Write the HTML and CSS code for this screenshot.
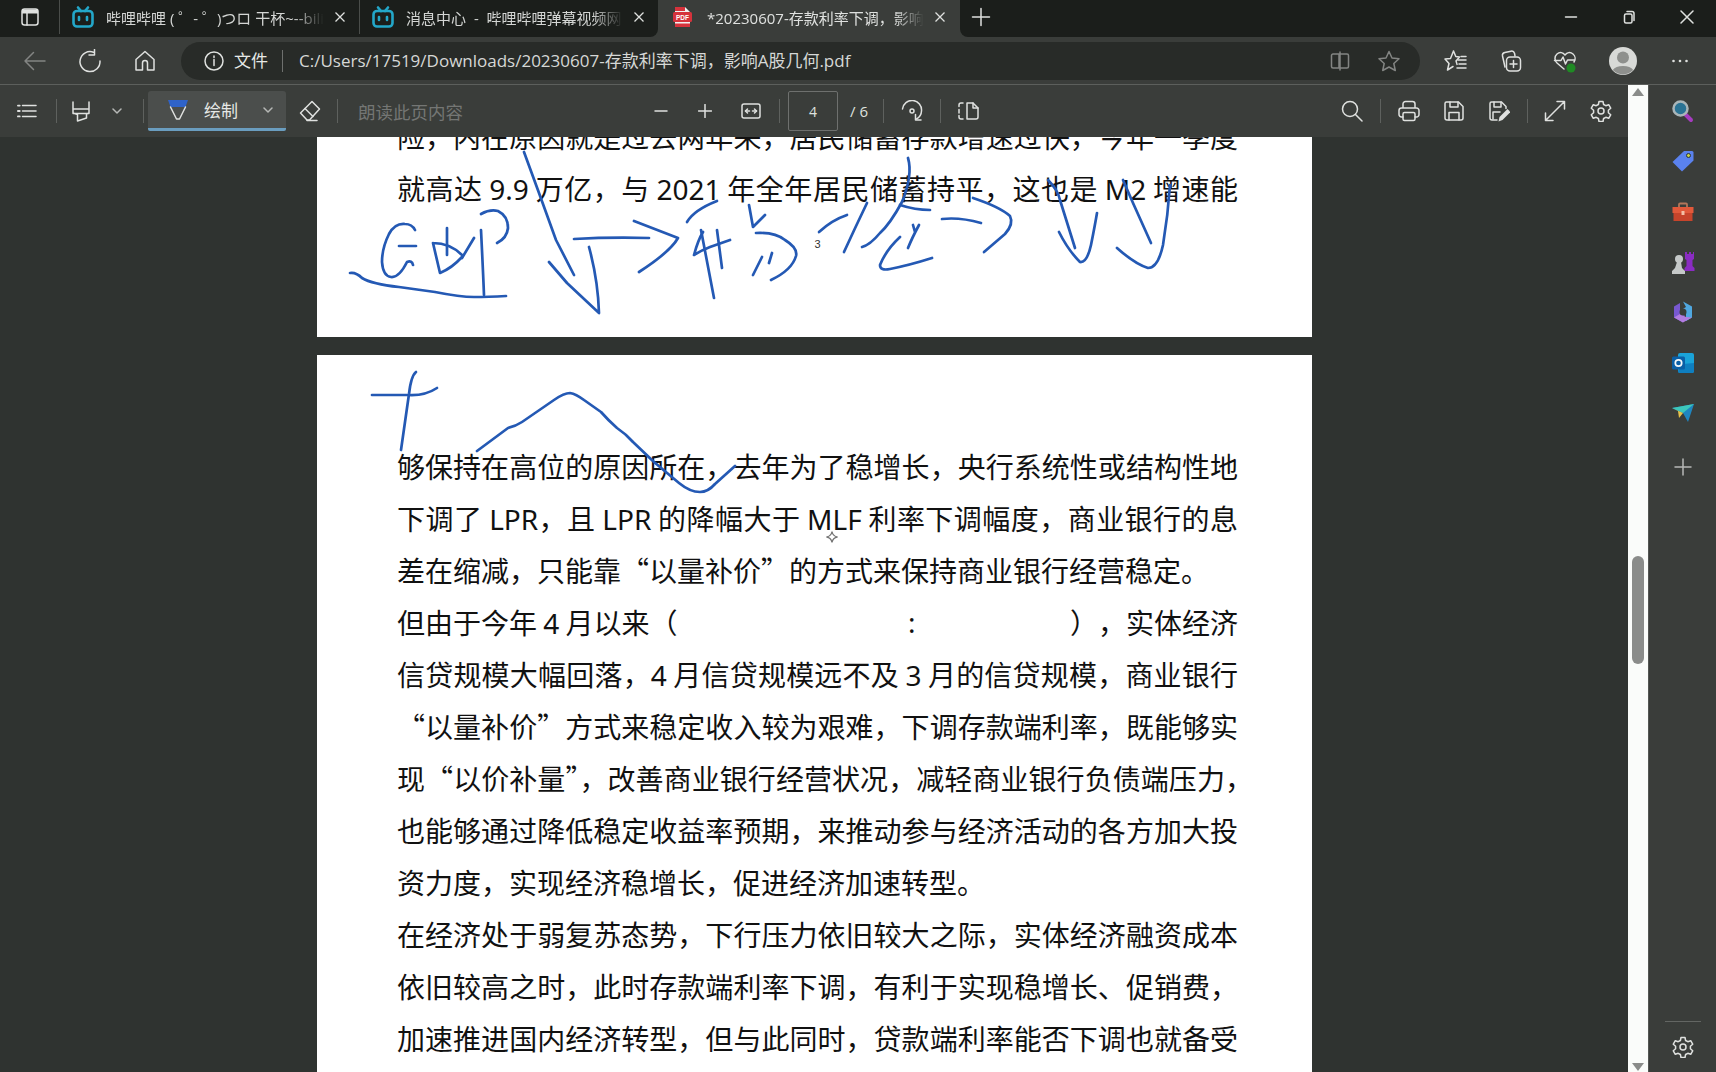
FILE: index.html
```html
<!DOCTYPE html>
<html lang="zh-CN">
<head>
<meta charset="utf-8">
<title>PDF</title>
<link rel="stylesheet" href="styles.css">
</head>
<body>
<div class="app">
  <header class="strip">
    <div class="strip-left">
      <div class="win-btn">
        <svg class="ic20" viewBox="0 0 20 20"><rect x="2" y="2" width="16" height="16" rx="2.5" class="s-white"/><path d="M2 6.5a4 4 0 0 1 1-4h14a4 4 0 0 1 1 4z" class="f-white"/><path d="M7 6v12" class="s-white"/></svg>
      </div>
      <div class="tab tab-a">
        <svg class="tab-ic" viewBox="0 0 24 24"><path d="M7 2.500 10 6M17 2.500 14 6" class="s-bili"/><rect x="2.500" y="6" width="19" height="15.500" rx="3.500" class="s-bili"/><path d="M8 12v3M16 12v3" class="s-bili"/></svg>
        <span class="tab-title">哔哩哔哩 ( ゜- ゜)つロ 干杯~--bilibili</span>
        <svg class="tab-x" viewBox="0 0 12 12"><path d="M1.500 1.500l9 9M10.500 1.500l-9 9"/></svg>
      </div>
      <div class="tab tab-b">
        <svg class="tab-ic" viewBox="0 0 24 24"><path d="M7 2.500 10 6M17 2.500 14 6" class="s-bili"/><rect x="2.500" y="6" width="19" height="15.500" rx="3.500" class="s-bili"/><path d="M8 12v3M16 12v3" class="s-bili"/></svg>
        <span class="tab-title tab-title-wide">消息中心 - 哔哩哔哩弹幕视频网 - (゜-゜)つロ 干杯~</span>
        <svg class="tab-x" viewBox="0 0 12 12"><path d="M1.500 1.500l9 9M10.500 1.500l-9 9"/></svg>
      </div>
    </div>
    <div class="tab tab-active">
      <svg class="tab-ic" viewBox="0 0 24 24"><path d="M5 2h10l5 5v15H5z" fill="#f2f2f2"/><rect x="3" y="7" width="19" height="10" rx="1.500" fill="#d5333c"/><path d="M5 18.500h15v3.500H5zM5 2h10v4H5z" fill="#d5333c"/><text x="12.500" y="14.800" class="pdf-mark">PDF</text></svg>
      <span class="tab-title">*20230607-存款利率下调，影响A股几何.pdf</span>
      <svg class="tab-x" viewBox="0 0 12 12"><path d="M1.500 1.500l9 9M10.500 1.500l-9 9"/></svg>
    </div>
    <div class="strip-right">
      <div class="new-tab"><svg class="ic20" viewBox="0 0 20 20"><path d="M10 1.500v17M1.500 10h17" class="s-white"/></svg></div>
      <div class="win-ctrls">
        <div class="ctrl"><svg class="ic14" viewBox="0 0 14 14"><path d="M1.500 7h11" class="s-white"/></svg></div>
        <div class="ctrl"><svg class="ic14" viewBox="0 0 14 14"><rect x="2.500" y="4" width="7.500" height="9" rx="1.500" class="s-white"/><path d="M5 1.500h5a2 2 0 0 1 2 2v7" class="s-white"/></svg></div>
        <div class="ctrl"><svg class="ic14" viewBox="0 0 14 14"><path d="M1 1l12 12M13 1 1 13" class="s-white"/></svg></div>
      </div>
    </div>
  </header>

  <nav class="navbar">
    <div class="cell"><svg class="ic24" viewBox="0 0 24 24"><path d="M22 12H2M10.500 3.500 2 12l8.500 8.500" class="s-dim"/></svg></div>
    <div class="cell"><svg class="ic24" viewBox="0 0 24 24"><path d="M15.500 3.200A10 10 0 1 0 22 12" class="s-white"/><path d="M16.500 0.500v5.500H11" class="s-white"/></svg></div>
    <div class="cell"><svg class="ic24" viewBox="0 0 24 24"><path d="M3 21V10.500L12 2.500l9 8V21h-6.500v-7a2.500 2.500 0 0 0-5 0v7z" class="s-white"/></svg></div>
    <div class="omni">
      <svg class="ic20" viewBox="0 0 20 20"><circle cx="10" cy="10" r="9" class="s-white"/><path d="M10 8.500v6M10 5v1.500" class="s-white"/></svg>
      <span class="omni-scheme">文件</span>
      <span class="omni-sep"></span>
      <span class="omni-url">C:/Users/17519/Downloads/20230607-存款利率下调，影响A股几何.pdf</span>
      <span class="omni-tools">
        <svg class="ic20" viewBox="0 0 20 20"><path d="M9 3H3a1.500 1.500 0 0 0-1.500 1.500v11A1.500 1.500 0 0 0 3 17h6zM11 3h6a1.500 1.500 0 0 1 1.500 1.500v11A1.500 1.500 0 0 1 17 17h-6M10 1v18" class="s-dim"/></svg>
        <svg class="ic22" viewBox="0 0 22 22"><path d="M11 1.500l3 6.500 7 .8-5.200 4.700 1.500 7L11 17l-6.300 3.500 1.500-7L1 8.800 8 8z" class="s-dim"/></svg>
      </span>
    </div>
    <div class="cell"><svg class="ic24" viewBox="0 0 24 24"><path d="M9.500 2l2.300 5.500 3.700.4-3.500 4 1 3.500M9 17.500 3.500 21l1.500-6.500L1 10l5.500-.5L9.500 2" class="s-white"/><path d="M14 11h8M15 15h7M13 19h9M17 7.500h5" class="s-white"/></svg></div>
    <div class="cell"><svg class="ic24" viewBox="0 0 24 24"><path d="M6 18 3.500 7a3 3 0 0 1 2.300-3.500L12 2.200a3 3 0 0 1 3.500 2L16 7" class="s-white"/><rect x="7.500" y="8" width="14" height="14" rx="3.500" class="s-white"/><path d="M14.500 11.500v7M11 15h7" class="s-white"/></svg></div>
    <div class="cell"><svg class="ic24" viewBox="0 0 24 24"><path d="M11 20 4 14a6 6 0 0 1 0-9c3-2.500 6-1.500 8 1 2-2.500 5-3.500 8-1a6 6 0 0 1 1 8" class="s-white"/><path d="M1.500 11.500H8l2-3.500 2.500 7 2-4h7" class="s-white"/><circle cx="18" cy="19" r="4.500" fill="#1f8a24"/></svg></div>
    <div class="cell"><div class="avatar"><svg viewBox="0 0 28 28"><circle cx="14" cy="14" r="14" fill="#d8dad7"/><circle cx="14" cy="10.500" r="6" fill="#8e908d"/><path d="M3.800 23a11 6.500 0 0 1 20.400 0 14 14 0 0 1-20.400 0z" fill="#8e908d"/></svg></div></div>
    <div class="cell"><svg class="ic20" viewBox="0 0 20 20"><circle cx="3.500" cy="10" r="1.300" class="f-white"/><circle cx="10" cy="10" r="1.300" class="f-white"/><circle cx="16.500" cy="10" r="1.300" class="f-white"/></svg></div>
  </nav>

  <div class="work">
    <div class="viewer-col">
      <div class="pdfbar">
        <div class="cell"><svg class="ic20" viewBox="0 0 22 22"><path d="M6 5h15M6 11h15M6 17h15" class="s-white"/><path d="M1 5h2M1 11h2M1 17h2" class="s-white-b"/></svg></div>
        <div class="cell"><i class="vsep"></i></div>
        <div class="cell"><svg class="ic22" viewBox="0 0 22 22"><path d="M3 2v7h16V2M3 9v4l4.500 1.500V21l9-3v-4l2.500-1V9M3 13.500h16" class="s-white"/></svg></div>
        <div class="cell"><svg class="ic10" viewBox="0 0 10 10"><path d="M1 3l4 4 4-4" class="s-mid"/></svg></div>
        <div class="cell"><i class="vsep"></i></div>
        <div class="draw-btn">
          <svg class="ic22" viewBox="0 0 22 22"><path d="M1 1h20l-2.500 7h-15z" fill="#2f63c9"/><path d="M3.500 8 9.500 20h3l6-12" class="s-white"/></svg>
          <span class="draw-label">绘制</span>
          <svg class="ic10 draw-chev" viewBox="0 0 10 10"><path d="M1 3l4 4 4-4" class="s-mid"/></svg>
        </div>
        <div class="cell"><svg class="ic22" viewBox="0 0 22 22"><path d="M13 1.500 20.500 9 10.500 20H8L1.500 13z" class="s-white"/><path d="M6 8.500l8 8M8 20.500h10" class="s-white"/></svg></div>
        <div class="cell"><i class="vsep"></i></div>
        <div class="read-aloud">朗读此页内容</div>
        <div class="cell"><svg class="ic14" viewBox="0 0 14 14"><path d="M1 7h12" class="s-white"/></svg></div>
        <div class="cell"><svg class="ic14" viewBox="0 0 14 14"><path d="M7 0.500v13M0.500 7h13" class="s-white"/></svg></div>
        <div class="cell"><svg class="ic20" viewBox="0 0 20 20"><rect x="1" y="3" width="18" height="14" rx="2" class="s-white"/><path d="M4.500 10h4M15.500 10h-4" class="s-white"/><path d="M6.500 8l-2 2 2 2M13.500 8l2 2-2 2" class="s-white"/></svg></div>
        <div class="cell"><i class="vsep"></i></div>
        <div class="page-wrap"><div class="page-input">4</div></div>
        <div class="page-total">/ 6</div>
        <div class="cell"><i class="vsep"></i></div>
        <div class="cell"><svg class="ic22" viewBox="0 0 22 22"><path d="M1.500 9A9.500 9.500 0 0 1 20.500 11a9.500 9.500 0 0 1-5 8" class="s-white"/><circle cx="11" cy="11" r="2" class="s-white"/><path d="M14.500 14.500v5.500H20" class="s-white"/></svg></div>
        <div class="cell"><i class="vsep"></i></div>
        <div class="cell"><svg class="ic22" viewBox="0 0 22 22"><path d="M10 3h6l5 5v9a2 2 0 0 1-2 2h-9z" class="s-white"/><path d="M16 3v5h5" class="s-white"/><path d="M2 6.500V5a2 2 0 0 1 2-2h2M2 9.500v3.500M2 15.500V17a2 2 0 0 0 2 2h2" class="s-white"/></svg></div>
        <div></div>
        <div class="cell"><svg class="ic22" viewBox="0 0 22 22"><circle cx="9" cy="9" r="7.500" class="s-white"/><path d="M14.500 14.500 21 21" class="s-white"/></svg></div>
        <div class="cell"><i class="vsep"></i></div>
        <div class="cell"><svg class="ic22" viewBox="0 0 22 22"><path d="M5 8V4a2.500 2.500 0 0 1 2.500-2.500h7A2.500 2.500 0 0 1 17 4v4M5 17H3.500A2.500 2.500 0 0 1 1 14.500V10.500A2.500 2.500 0 0 1 3.500 8h15a2.500 2.500 0 0 1 2.500 2.500v4a2.500 2.500 0 0 1-2.500 2.500H17" class="s-white"/><rect x="5" y="12.500" width="12" height="8" rx="1.500" class="s-white"/></svg></div>
        <div class="cell"><svg class="ic22" viewBox="0 0 22 22"><path d="M3.500 2h12L20 6.500V18a2 2 0 0 1-2 2H4a2 2 0 0 1-2-2V3.500A1.500 1.500 0 0 1 3.500 2z" class="s-white"/><path d="M7 2v5h8V2M6 20v-7.500h10V20" class="s-white"/></svg></div>
        <div class="cell"><svg class="ic22" viewBox="0 0 22 22"><path d="M9 20H4a2 2 0 0 1-2-2V3.500A1.500 1.500 0 0 1 3.500 2h10L18 6.500v2" class="s-white"/><path d="M6 2v5h7V2M5 19v-7h7" class="s-white"/><path d="M10.500 21.500l1-4.500 8-8 3 3-8 8z" class="f-white"/></svg></div>
        <div class="cell"><i class="vsep"></i></div>
        <div class="cell"><svg class="ic22" viewBox="0 0 22 22"><path d="M1.500 20.500l19-19M13 1.500h7.500V9M1.500 13v7.500H9" class="s-white"/></svg></div>
        <div class="cell"><svg class="ic22" viewBox="0 0 22 22"><path d="M9 1.500h4l.6 3 2.200 1.200 2.900-1 2 3.500-2.300 2v2.600l2.300 2-2 3.500-2.900-1-2.200 1.200-.6 3H9l-.6-3-2.200-1.200-2.900 1-2-3.500 2.300-2V10.200L1.300 8.200l2-3.500 2.900 1 2.200-1.200z" class="s-white"/><circle cx="11" cy="11" r="3" class="s-white"/></svg></div>
      </div>

      <main class="viewer">
        <section class="page page-top">
          <div class="ln">险，内在原因就是过去两年来，居民储蓄存款增速过快，今年一季度</div>
          <div class="ln">就高达 <span class="lat">9.9</span> 万亿，与 <span class="lat">2021</span> 年全年居民储蓄持平，这也是 <span class="lat">M2</span> 增速能</div>
          <div class="page-no">3</div>
        </section>
        <section class="page page-main">
          <div class="ln">够保持在高位的原因所在，去年为了稳增长，央行系统性或结构性地</div>
          <div class="ln">下调了 <span class="lat">LPR</span>，且 <span class="lat">LPR</span> 的降幅大于 <span class="lat">MLF</span> 利率下调幅度，商业银行的息</div>
          <div class="ln ln-end">差在缩减，只能靠“以量补价”的方式来保持商业银行经营稳定。</div>
          <div class="ln ln-split"><span>但由于今年 <span class="lat">4</span> 月以来（</span><span class="ln-right"><span class="lat">:</span><span class="ln-spaced">），实体经济</span></span></div>
          <div class="ln">信贷规模大幅回落，<span class="lat">4</span> 月信贷规模远不及 <span class="lat">3</span> 月的信贷规模，商业银行</div>
          <div class="ln">“以量补价”方式来稳定收入较为艰难，下调存款端利率，既能够实</div>
          <div class="ln">现“以价补量”，改善商业银行经营状况，减轻商业银行负债端压力<span class="tuck">，</span></div>
          <div class="ln">也能够通过降低稳定收益率预期，来推动参与经济活动的各方加大投</div>
          <div class="ln ln-end">资力度，实现经济稳增长，促进经济加速转型。</div>
          <div class="ln">在经济处于弱复苏态势，下行压力依旧较大之际，实体经济融资成本</div>
          <div class="ln">依旧较高之时，此时存款端利率下调，有利于实现稳增长、促销费，</div>
          <div class="ln">加速推进国内经济转型，但与此同时，贷款端利率能否下调也就备受</div>
        </section>
        <svg class="ink" viewBox="0 137 1628 935">
          <path d="M350 273Q356 272 362 278Q372 284 399 287L435 292Q460 297 474 297T506 296"/>
          <path d="M415 230Q412 224 405 224Q395 223 389 234Q382 248 382 262Q383 276 391 277Q399 278 407 262Q412 260 413 265"/>
          <path d="M399 246H416"/>
          <path d="M433 243L440 273Q452 268 462 257M433 243Q450 243 462 255"/>
          <path d="M447 228V255M474 238L462 258"/>
          <path d="M481 230Q483 270 484 295"/>
          <path d="M481 214Q490 209 498 211Q508 216 508 228Q507 238 497 243"/>
          <path d="M524 152L539 193L556 240L574 275"/>
          <path d="M549 262L567 283L599 313Q598 280 589 247"/>
          <path d="M574 239Q610 237 649 238"/>
          <path d="M634 221L678 238Q670 252 639 272"/>
          <path d="M687 222Q694 210 717 201"/>
          <path d="M703 232Q698 240 694 255Q702 250 710 247L730 240"/>
          <path d="M701 230L714 298M717 230L722 268"/>
          <path d="M749 205L753 227L765 215M756 233Q775 232 785 240Q798 248 796 256Q792 270 771 280"/>
          <path d="M762 257L753 275M772 253L769 263"/>
          <path d="M819 232Q832 220 847 215"/>
          <path d="M867 203Q855 228 844 252"/>
          <path d="M908 158Q913 175 902 202Q890 224 880 233Q870 245 862 247"/>
          <path d="M900 205Q915 210 930 210"/>
          <path d="M900 237Q886 250 880 265Q880 271 890 269Q910 265 932 258"/>
          <path d="M919 225Q912 238 908 248M913 225L915 232"/>
          <path d="M942 219Q960 217 981 223"/>
          <path d="M973 198Q1000 207 1010 216Q1014 224 1005 234L984 252"/>
          <path d="M1048 180Q1058 190 1060 200L1075 248"/>
          <path d="M1059 232Q1068 250 1080 262Q1087 263 1091 245Q1095 225 1097 213"/>
          <path d="M1123 180L1133 203L1151 243"/>
          <path d="M1117 248Q1135 264 1148 268Q1158 268 1163 245Q1168 215 1170 185"/>
          <path d="M372 395H408Q425 396 437 388"/>
          <path d="M416 372Q411 376 409 394L401 450"/>
          <path d="M477 451L508 428Q516 426 522 422L554 400Q564 393 570 393Q576 394 584 400L601 412Q608 420 617 428Q626 434 633 442L654 462L679 483Q690 492 700 492Q708 492 715 484L735 466"/>
        </svg>
        <svg class="cursor-star" viewBox="0 0 14 14"><path d="M7 1.500Q7.800 6.200 12.500 7 7.800 7.800 7 12.500 6.200 7.800 1.500 7 6.200 6.200 7 1.500z"/></svg>
      </main>
    </div>

    <aside class="scroll">
      <i class="arrow-up"></i>
      <i class="thumb"></i>
      <i class="arrow-down"></i>
    </aside>

    <aside class="side">
      <div class="side-ic"><svg class="ic24" viewBox="0 0 24 24"><path d="M14 15l6 6" stroke="#a63cc0" stroke-width="4" stroke-linecap="round"/><circle cx="9.500" cy="9.500" r="7" fill="#2a7394" stroke="#a9b5b8" stroke-width="2.500"/></svg></div>
      <div class="side-ic"><svg class="ic24" viewBox="0 0 24 24"><path d="M13 2h8a1.500 1.500 0 0 1 1.500 1.500v8L11 22.500 1.500 13z" fill="#5a82ee"/><circle cx="17.500" cy="6.500" r="2" fill="#c6d34a" stroke="#27323f"/></svg></div>
      <div class="side-ic"><svg class="ic24" viewBox="0 0 24 24"><path d="M8 7V4.500A1 1 0 0 1 9 3.500h6a1 1 0 0 1 1 1V7" fill="none" stroke="#b4765a" stroke-width="1.800"/><path d="M1.500 7h21v6h-21z" fill="#e2593a"/><path d="M2.500 13h19v8h-19z" fill="#c7442b"/><rect x="10.500" y="11" width="3" height="4" fill="#f3c0a6"/></svg></div>
      <div class="side-ic"><svg class="ic24" viewBox="0 0 24 24"><path d="M14 2h2v2h2V2h2v2h2V2h1v7l-1.500 1v6l2 2v3H13.500v-3l2-2v-6L14 9z" fill="#8a2cc2"/><circle cx="8" cy="9" r="4" fill="#c5c9c8"/><path d="M6 12h4l1 6 3 3v3H1v-3l3-3z" fill="#c5c9c8"/></svg></div>
      <div class="side-ic"><svg class="ic24" viewBox="0 0 24 24"><path d="M12 1.500l9 5v11l-6 3.500V13l-5-3 5-3z" fill="#4fa8e0"/><path d="M12 22.500l-9-5v-11l6-3.500v9l5 3-2 2z" fill="#7858d0"/><path d="M3 17.500l6-3.500 6 3 6 .5-9 5z" fill="#b27ce0"/><circle cx="12" cy="12" r="3.500" fill="#3a3d3a"/></svg></div>
      <div class="side-ic"><svg class="ic24" viewBox="0 0 24 24"><rect x="7" y="2" width="16" height="20" rx="2" fill="#1aa3d8"/><path d="M12 13l11-1v8a2 2 0 0 1-2 2H9a2 2 0 0 1-2-2z" fill="#0f7fc0"/><rect x="1" y="5.500" width="13" height="13" rx="1.500" fill="#0a5fa6"/><circle cx="7.500" cy="12" r="3.200" fill="none" stroke="#f2f6f8" stroke-width="1.700"/></svg></div>
      <div class="side-ic"><svg class="ic24" viewBox="0 0 24 24"><path d="M1 7 23 3 17 21 12 12z" fill="#1f86c0"/><path d="M1 7l22-4-11 9z" fill="#3cc7bb"/><path d="M1 7 12 12 8 17 7 10z" fill="#e8c24a"/></svg></div>
      <div class="side-ic side-add"><svg class="ic20" viewBox="0 0 20 20"><path d="M10 2v16M2 10h16" class="s-mid"/></svg></div>
      <div class="side-fill"></div>
      <i class="side-rule"></i>
      <div class="side-gear"><svg class="ic22" viewBox="0 0 22 22"><path d="M9 1.500h4l.6 3 2.200 1.200 2.900-1 2 3.500-2.300 2v2.600l2.300 2-2 3.500-2.900-1-2.200 1.200-.6 3H9l-.6-3-2.200-1.200-2.900 1-2-3.500 2.300-2V10.200L1.300 8.200l2-3.500 2.900 1 2.200-1.200z" class="s-white"/><circle cx="11" cy="11" r="3" class="s-white"/></svg></div>
    </aside>
  </div>
</div>
</body>
</html>
```

FILE: styles.css
```css
* { box-sizing: border-box; }
html, body { margin: 0; height: 100%; overflow: hidden; }
body { background: #3a3d3a; font-family: "Open Sans", "Noto Sans CJK SC", sans-serif; color: #dcdedc; }
.app { width: 1716px; height: 1072px; display: flex; flex-direction: column; overflow: hidden; }

svg { display: block; flex: none; }
.ic10 { width: 10px; height: 10px; }
.ic14 { width: 14px; height: 14px; }
.ic20 { width: 20px; height: 20px; }
.ic22 { width: 22px; height: 22px; }
.ic24 { width: 24px; height: 24px; }
.s-white, .s-dim, .s-mid, .s-bili, .s-white-b { fill: none; stroke-width: 1.500; stroke-linecap: round; stroke-linejoin: round; }
.s-white { stroke: #dfe1df; }
.s-white-b { stroke: #dfe1df; stroke-width: 2; }
.s-dim { stroke: #838583; }
.s-mid { stroke: #b6b8b6; }
.s-bili { stroke: #23a7c9; stroke-width: 2.600; }
.f-white { fill: #dfe1df; }

.strip { height: 37px; display: flex; flex: none; background: #3a3d3a; }
.strip-left { width: 658px; height: 37px; display: flex; align-items: flex-start; background: #1b1e1b; border-bottom-right-radius: 8px; }
.strip-right { flex: 1; height: 37px; display: flex; align-items: flex-start; background: #1b1e1b; border-bottom-left-radius: 8px; }
.win-btn, .new-tab, .ctrl { height: 34px; display: flex; align-items: center; justify-content: center; }
.win-btn { width: 59px; }
.tab { height: 34px; display: flex; align-items: center; padding: 0 9px 0 11px; font-size: 15px; color: #d4d6d4; }
.tab-a { width: 300px; border-left: 1px solid #4a4d4a; }
.tab-b { width: 299px; border-left: 1px solid #4a4d4a; }
.tab-active { width: 302px; height: 37px; padding: 0 10px 3px 12px; color: #dfe1df; }
.tab-ic { width: 24px; height: 24px; }
.tab-title { flex: 1; min-width: 0; margin: 0 6px 0 11px; white-space: nowrap; overflow: hidden; -webkit-mask-image: linear-gradient(90deg, #000 86%, transparent 100%); mask-image: linear-gradient(90deg, #000 86%, transparent 100%); }
.tab-active .tab-title { margin-left: 13px; }
.tab-title-wide { word-spacing: 4px; }
.tab-x { width: 12px; height: 12px; margin: 0 4px; fill: none; stroke: #dfe1df; stroke-width: 1.300; }
.pdf-mark { font: 700 6.500px "Liberation Sans", sans-serif; fill: #fff; text-anchor: middle; }
.new-tab { width: 42px; }
.win-ctrls { margin-left: auto; display: flex; }
.ctrl { width: 58px; }

.navbar { height: 48px; flex: none; padding: 0 0 0 8px; display: grid; grid-template-columns: 54px 56px 54px 1248px 72px 38px 70px 46px 68px; align-items: center; border-bottom: 1px solid #5c5f5c; }
.cell { display: flex; justify-content: center; align-items: center; min-width: 0; }
.omni { margin-left: 9px; height: 38px; border-radius: 19px; background: #282b28; display: flex; align-items: center; padding-left: 23px; }
.omni-scheme { margin-left: 10px; padding-bottom: 2px; font-size: 17px; color: #e6e8e6; }
.omni-sep { width: 1px; height: 22px; margin: 0 16px 0 14px; background: #6e706e; }
.omni-url { padding-bottom: 2px; font-size: 17px; color: #d6d8d6; white-space: nowrap; }
.omni-tools { margin-left: auto; display: flex; align-items: center; gap: 28px; padding-right: 20px; }
.avatar { width: 28px; height: 28px; }

.work { flex: 1; display: flex; min-height: 0; }
.viewer-col { width: 1628px; display: flex; flex-direction: column; }
.pdfbar { height: 52px; flex: none; padding: 0 4px 0 8px; display: grid; grid-template-columns: 38px 20px 30px 42px 10px 138px 48px 6px 299px 44px 44px 48px 8px 55px 42px 6px 52px 4px 52px 336px 44px 12px 46px 44px 46px 10px 46px 46px; align-items: center; }
.vsep { display: block; width: 1px; height: 24px; background: #5e615e; }
.draw-btn { height: 40px; display: flex; align-items: center; padding-left: 19px; background: #4b4e4c; border-bottom: 3px solid #6a9dbf; border-radius: 3px 3px 2px 2px; }
.draw-label { margin-left: 15px; font-size: 17px; color: #e6e8e6; }
.draw-chev { margin-left: 25px; }
.read-aloud { padding-left: 18px; font-size: 17.500px; color: #747674; white-space: nowrap; }
.page-wrap { display: flex; justify-content: flex-end; }
.page-input { width: 50px; height: 40px; border: 1px solid #6e706e; border-radius: 2px; display: flex; align-items: center; justify-content: center; font-size: 14px; color: #dfe1df; }
.page-total { padding-left: 12px; font-size: 15px; color: #dfe1df; white-space: nowrap; }

.viewer { position: relative; flex: 1; min-height: 0; overflow: hidden; background: #2f3330; padding-left: 317px; display: flex; flex-direction: column; gap: 18px; }
.page { width: 995px; flex: none; background: #fff; color: #111; padding: 0 74px 0 80px; overflow: hidden; font-family: "Noto Sans CJK SC", sans-serif; font-size: 28px; }
.page-top { height: 200px; display: flex; flex-direction: column; justify-content: flex-end; }
.page-main { height: 760px; padding-top: 85px; }
.ln { height: 52px; line-height: 52px; width: 841px; flex: none; text-align: justify; text-align-last: justify; }
.ln-end { text-align-last: left; }
.ln-split { display: flex; justify-content: space-between; }
.ln-right { width: 330px; display: flex; justify-content: space-between; }
.ln-spaced { text-spacing-trim: space-all; }
.tuck { letter-spacing: -15px; }
.lat { font-family: "Noto Sans", sans-serif; }
.page-no { height: 123px; padding-top: 22px; flex: none; font-size: 11px; line-height: 16px; text-align: center; color: #333; font-family: "Liberation Sans", sans-serif; }
.ink { position: absolute; left: 0; top: 0; width: 1628px; height: 935px; fill: none; stroke: #2459b4; stroke-width: 2.700; stroke-linecap: round; stroke-linejoin: round; }
.cursor-star { position: absolute; left: 825px; top: 393px; width: 14px; height: 14px; fill: none; stroke: #777; stroke-width: 1.300; }

.scroll { width: 20px; position: relative; background: #fafcfa; flex: none; }
.arrow-up, .arrow-down { position: absolute; left: 4px; width: 0; height: 0; border-left: 6px solid transparent; border-right: 6px solid transparent; }
.arrow-up { top: 3px; border-bottom: 8px solid #8a8c8a; }
.arrow-down { bottom: 1px; border-top: 8px solid #8a8c8a; }
.thumb { position: absolute; left: 4px; top: 471px; width: 12px; height: 108px; background: #8a8c8a; border-radius: 6px; }

.side { flex: 1; display: flex; flex-direction: column; align-items: center; padding-top: 1px; background: #3a3d3a; border-left: 1px solid #545754; }
.side-ic { height: 50.300px; flex: none; display: flex; align-items: center; }
.side-add { margin-top: 4px; }
.side-fill { flex: 1; }
.side-rule { display: block; width: 36px; height: 1px; background: #636663; }
.side-gear { height: 50px; display: flex; align-items: center; }
```
